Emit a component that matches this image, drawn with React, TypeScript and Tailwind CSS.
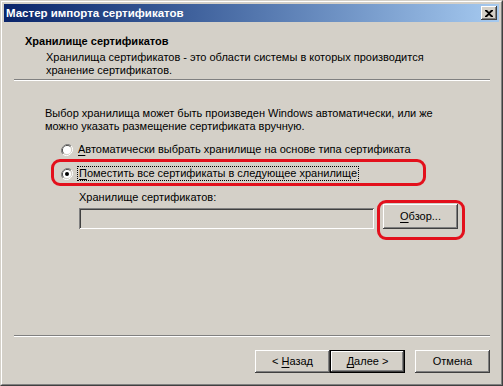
import React from "react";

/* ────────────────────────────────────────────────────────────────
   CLASSIC BITS
   ──────────────────────────────────────────────────────────────── */

const raised =
  "shadow-[inset_-1px_-1px_#404040,inset_1px_1px_#ffffff,inset_-2px_-2px_#808080,inset_2px_2px_#d4d0c8]";

function Key({ children, first }: { children: React.ReactNode; first: string }) {
  return (
    <>
      <span className="underline underline-offset-[2px]">{first}</span>
      {children}
    </>
  );
}

function WinButton({
  children,
  isDefault,
  className = "",
}: {
  children: React.ReactNode;
  isDefault?: boolean;
  className?: string;
}) {
  return (
    <div
      className={`w-[75px] h-[23px] bg-[#d4d0c8] flex items-center justify-center text-black ${
        isDefault ? "border border-black" : ""
      } ${className}`}
    >
      <div className={`w-full h-full flex items-center justify-center ${raised}`}>
        {children}
      </div>
    </div>
  );
}

function Radio({ checked }: { checked?: boolean }) {
  return (
    <svg width="12" height="12" viewBox="0 0 12 12" className="shrink-0">
      {/* outer: shadow top-left, highlight bottom-right */}
      <path d="M10.2 1.8 A6 6 0 0 0 1.8 10.2" stroke="#808080" strokeWidth="1" fill="none" />
      <path d="M1.8 10.2 A6 6 0 0 0 10.2 1.8" stroke="#ffffff" strokeWidth="1" fill="none" />
      <path d="M9.5 2.5 A5 5 0 0 0 2.5 9.5" stroke="#404040" strokeWidth="1" fill="none" />
      <path d="M2.5 9.5 A5 5 0 0 0 9.5 2.5" stroke="#d4d0c8" strokeWidth="1" fill="none" />
      <circle cx="6" cy="6" r="4" fill="#ffffff" />
      {checked && <circle cx="6" cy="6" r="2" fill="#000000" />}
    </svg>
  );
}

/* ════════════════════════════════════════════════════════════════
   WIZARD
   ════════════════════════════════════════════════════════════════ */

export default function App() {
  return (
    <div className="w-[503px] h-[386px] font-['Liberation_Sans',Arial,sans-serif] text-[11px] leading-[13px] text-black">
      {/* ── WINDOW FRAME ── */}
      <div className="relative w-full h-full bg-[#d4d0c8] border border-[#d4d0c8] border-r-[#404040] border-b-[#404040]">
        <div className="w-full h-full border border-white border-r-[#808080] border-b-[#808080] p-[2px] flex flex-col">
          {/* ── TITLE BAR ── */}
          <div className="h-[18px] shrink-0 bg-gradient-to-r from-[#0a246a] to-[#a6caf0] flex items-center pl-[2px] pr-[2px]">
            <span className="text-white font-bold text-[11.5px] flex-1">
              Мастер импорта сертификатов
            </span>
            <div className={`w-[16px] h-[14px] bg-[#d4d0c8] flex items-center justify-center ${raised}`}>
              <svg width="8" height="7" viewBox="0 0 8 7">
                <path
                  d="M0 0h2l2 2 2-2h2v1L5 3.5 8 6v1H6L4 5 2 7H0V6l3-2.5L0 1z"
                  fill="#000"
                />
              </svg>
            </div>
          </div>

          {/* ── CLIENT ── */}
          <div className="flex-1 flex flex-col">
            {/* header */}
            <div className="pl-[21px] pt-[13px]">
              <div className="font-bold">Хранилище сертификатов</div>
              <div className="pl-[21px] mt-[3px]">
                Хранилища сертификатов - это области системы в которых производится
                <br />
                хранение сертификатов.
              </div>
            </div>
            <div className="mt-[2px] ml-[10px] mr-[9px] border-t border-[#808080] border-b border-b-white" />

            {/* body */}
            <div className="pl-[41px] pt-[26px]">
              <div>
                Выбор хранилища может быть произведен Windows автоматически, или же
                <br />
                можно указать размещение сертификата вручную.
              </div>

              <div className="pl-[16px] mt-[8px] flex flex-col gap-[7px]">
                <div className="h-[17px] flex items-center gap-[4px]">
                  <Radio />
                  <span className="px-[1px]">
                    <Key first="А">втоматически выбрать хранилище на основе типа сертификата</Key>
                  </span>
                </div>
                <div className="h-[17px] flex items-center gap-[4px]">
                  <Radio checked />
                  <span className="px-[1px] border border-dotted border-black leading-[13px]">
                    <Key first="П">оместить все сертификаты в следующее хранилище</Key>
                  </span>
                </div>
              </div>

              <div className="pl-[34px] mt-[9px]">
                <div>Хранилище сертификатов:</div>
                <div className="flex items-end gap-[9px]">
                  <div className="w-[295px] h-[21px] bg-[#d4d0c8] shadow-[inset_1px_1px_#808080,inset_-1px_-1px_#ffffff,inset_2px_2px_#404040,inset_-2px_-2px_#d4d0c8]" />
                  <WinButton className="h-[25px]">
                    <Key first="О">бзор...</Key>
                  </WinButton>
                </div>
              </div>
            </div>

            {/* footer */}
            <div className="mt-auto">
              <div className="ml-[10px] mr-[9px] border-t border-[#808080] border-b border-b-white" />
              <div className="flex justify-end pr-[9px] pt-[13px] pb-[9px]">
                <WinButton>
                  &lt;&nbsp;<Key first="Н">азад</Key>
                </WinButton>
                <WinButton isDefault>
                  <Key first="Д">алее</Key>&nbsp;&gt;
                </WinButton>
                <WinButton className="ml-[10px]">Отмена</WinButton>
              </div>
            </div>
          </div>
        </div>

        {/* ── ANNOTATION OVERLAYS ── */}
        <div className="absolute left-[50px] top-[158px] w-[375px] h-[27px] border-[3px] border-[#e3101c] rounded-[9px] pointer-events-none" />
        <div className="absolute left-[376px] top-[199px] w-[88px] h-[40px] border-[3px] border-[#e3101c] rounded-[9px] pointer-events-none" />
      </div>
    </div>
  );
}
